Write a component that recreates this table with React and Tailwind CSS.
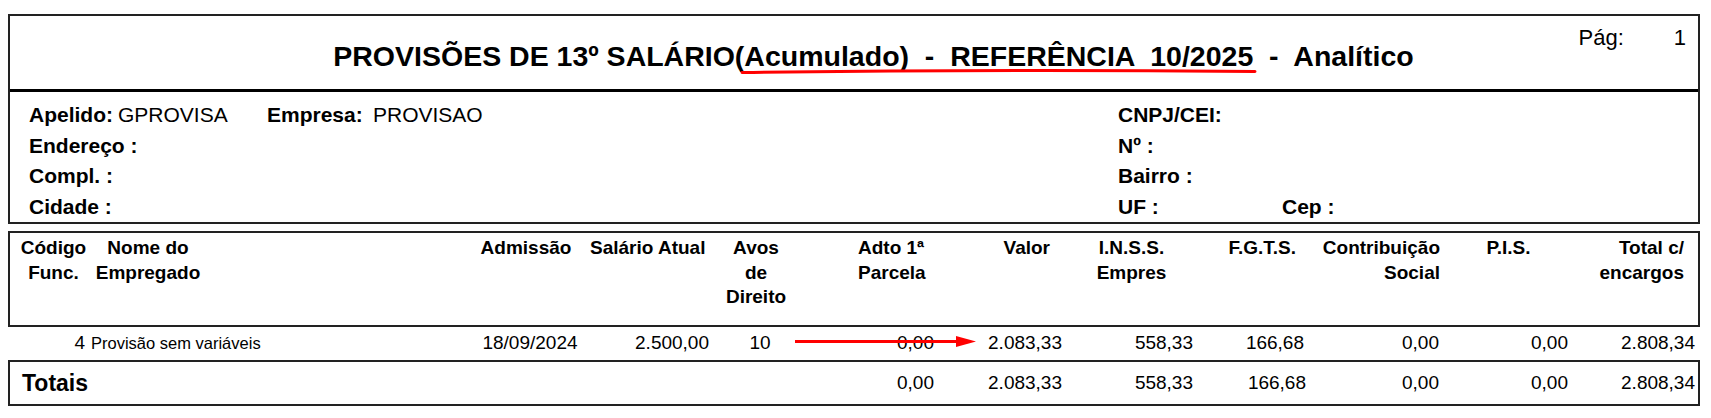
import React from 'react'

// colunas da tabela (largura fixa, igual ao relatório impresso)
const COLS = 'grid grid-cols-[78px_382px_120px_122px_88px_140px_125px_133px_110px_137px_127px_126px]'

const HEAD = [
  { lines: ['Código', 'Func.'], cls: 'text-center pl-[9px]' },
  { lines: ['Nome do', 'Empregado'], cls: 'w-[120px] text-center' },
  { lines: ['Admissão'], cls: 'text-center pr-[8px]' },
  { lines: ['Salário Atual'], cls: 'text-right pr-[7px]' },
  { lines: ['Avos', 'de', 'Direito'], cls: 'text-center' },
  { lines: ['Adto 1ª', 'Parcela'], cls: 'text-left pl-[58px]' },
  { lines: ['Valor'], cls: 'text-right pr-[15px]' },
  { lines: ['I.N.S.S.', 'Empres'], cls: 'text-center' },
  { lines: ['F.G.T.S.'], cls: 'text-right pr-[12px]' },
  { lines: ['Contribuição', 'Social'], cls: 'text-right pr-[5px]' },
  { lines: ['P.I.S.'], cls: 'text-center' },
  { lines: ['Total c/', 'encargos'], cls: 'text-right pr-[14px]' },
]

const ROW = [
  { v: '18/09/2024', cls: 'text-center' },
  { v: '2.500,00', cls: 'text-right pr-[3px]' },
  { v: '10', cls: 'text-center pl-[8px]' },
  { v: '0,00', cls: 'text-right pr-[6px]' },
  { v: '2.083,33', cls: 'text-right pr-[3px]' },
  { v: '558,33', cls: 'text-right pr-[5px]' },
  { v: '166,68', cls: 'text-right pr-[4px]' },
  { v: '0,00', cls: 'text-right pr-[6px]' },
  { v: '0,00', cls: 'text-right pr-[4px]' },
  { v: '2.808,34', cls: 'text-right pr-[3px]' },
]

const TOT = [
  { v: '', cls: '' },
  { v: '', cls: '' },
  { v: '', cls: '' },
  { v: '0,00', cls: 'text-right pr-[6px]' },
  { v: '2.083,33', cls: 'text-right pr-[3px]' },
  { v: '558,33', cls: 'text-right pr-[5px]' },
  { v: '166,68', cls: 'text-right pr-[2px]' },
  { v: '0,00', cls: 'text-right pr-[6px]' },
  { v: '0,00', cls: 'text-right pr-[4px]' },
  { v: '2.808,34', cls: 'text-right pr-[3px]' },
]

export default function App() {
  return (
    <div className="w-[1711px] h-[418px] bg-white pt-[14px] pl-[8px] font-['Liberation_Sans',Arial,sans-serif] text-black">
      {/* cabeçalho + dados da empresa */}
      <div className="w-[1692px] border-2 border-[#222]">
        <div className="relative h-[76px] border-b-[3px] border-black flex justify-center pl-[39px] pt-[24px]">
          <div className="text-[28.5px] leading-[32px] font-bold whitespace-pre">
            {'PROVISÕES DE 13º SALÁRIO(Acumulado)  -  REFERÊNCIA  10/2025  -  Analítico'}
          </div>
          <div className="absolute right-[12px] top-[10px] flex gap-[50px] text-[22px] leading-[24px]">
            <span>Pág:</span>
            <span>1</span>
          </div>
          <svg className="absolute left-0 top-0 pointer-events-none" width="1688" height="73">
            <path d="M732 56.5 Q 990 53 1245 55.5" stroke="#f00" strokeWidth="3" fill="none" strokeLinecap="round" />
          </svg>
        </div>

        <div className="h-[130px] pt-[8px] pl-[19px] grid grid-cols-[1089px_1fr] text-[21px] leading-[30.5px]">
          <div>
            <div className="flex">
              <span className="w-[89px] font-bold">Apelido:</span>
              <span className="w-[149px]">GPROVISA</span>
              <span className="w-[106px] font-bold">Empresa:</span>
              <span>PROVISAO</span>
            </div>
            <div className="font-bold">Endereço :</div>
            <div className="font-bold">Compl. :</div>
            <div className="font-bold">Cidade :</div>
          </div>
          <div className="font-bold">
            <div>CNPJ/CEI:</div>
            <div>Nº :</div>
            <div>Bairro :</div>
            <div className="flex">
              <span className="w-[164px]">UF :</span>
              <span>Cep :</span>
            </div>
          </div>
        </div>
      </div>

      {/* cabeçalho da tabela */}
      <div className="mt-[7px] w-[1692px] h-[96px] border-2 border-[#222]">
        <div className={COLS + ' pt-[3px] text-[19px] font-bold leading-[24.5px]'}>
          {HEAD.map((h, i) => (
            <div key={i} className={h.cls + ' whitespace-nowrap'}>
              {h.lines.map((l, j) => <div key={j}>{l}</div>)}
            </div>
          ))}
        </div>
      </div>

      {/* linha do funcionário */}
      <div className="relative w-[1692px] h-[31px] border-x-2 border-transparent">
        <div className={COLS + ' h-full items-center text-[19px] leading-[22px]'}>
          <div className="text-right pr-[3px]">4</div>
          <div className="pl-[3px] text-[16.5px]">Provisão sem variáveis</div>
          {ROW.map((c, i) => <div key={i} className={c.cls}>{c.v}</div>)}
        </div>
        <svg className="absolute left-0 top-0 pointer-events-none" width="1000" height="31">
          <line x1="785" y1="14.5" x2="948" y2="14.5" stroke="#f00" strokeWidth="3" />
          <polygon points="946,9 966,14.5 946,20" fill="#f00" />
        </svg>
      </div>

      {/* totais */}
      <div className="mt-[2px] w-[1692px] h-[46px] border-2 border-[#222]">
        <div className={COLS + ' h-full items-center text-[19px] leading-[22px]'}>
          <div className="col-span-2 pl-[12px] text-[23px] font-bold">Totais</div>
          {TOT.map((c, i) => <div key={i} className={c.cls}>{c.v}</div>)}
        </div>
      </div>
    </div>
  )
}
